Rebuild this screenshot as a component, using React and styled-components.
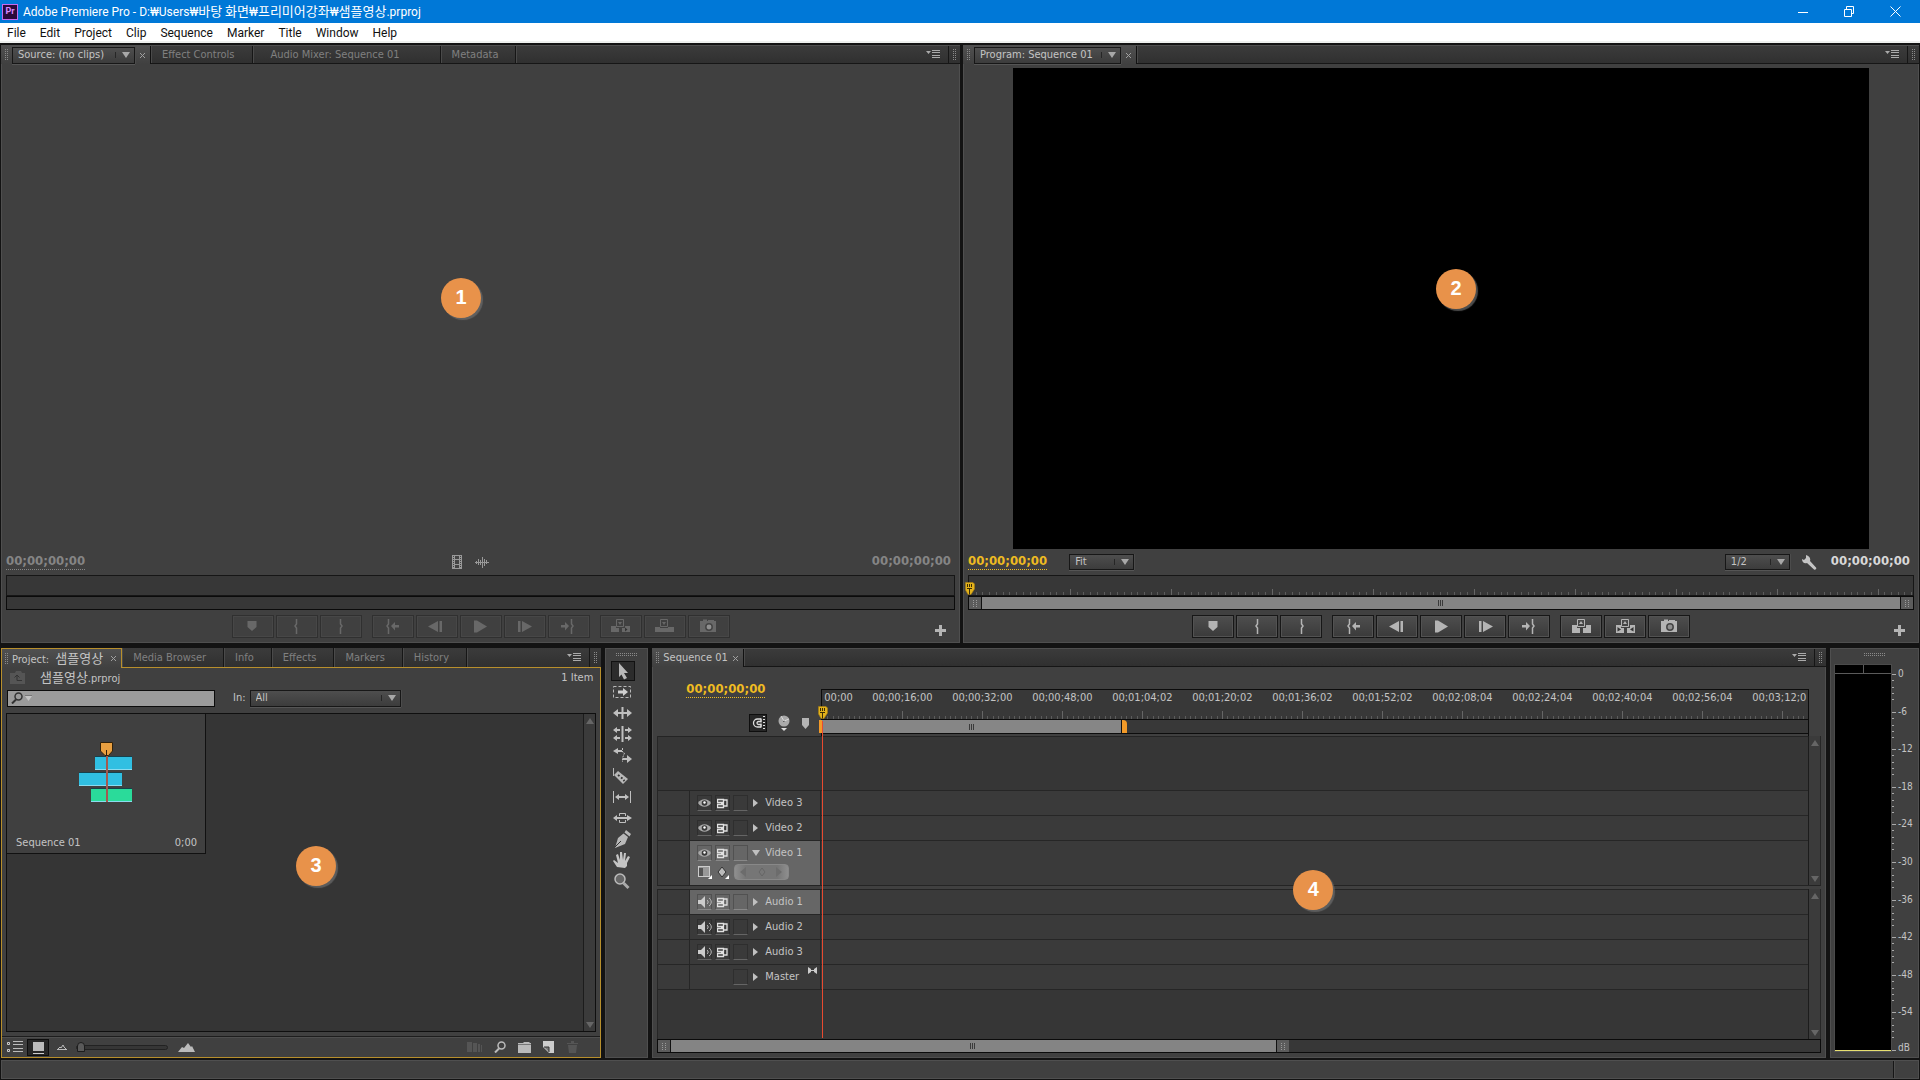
import React from 'react';
import styled, { createGlobalStyle, css } from 'styled-components';

const GlobalStyle = createGlobalStyle`
  * { box-sizing: border-box; }
  html, body { margin: 0; padding: 0; overflow: hidden; background: #131313; }
  body, button, input, select {
    font-family: 'DejaVu Sans Condensed', 'Noto Sans', 'Noto Sans CJK KR', sans-serif;
    font-size: 11px;
    line-height: 14px;
    color: #c4c4c4;
  }
  button { padding: 0; margin: 0; border: 0; background: none; }
  svg { display: block; flex: none; }
`;

const Window = styled.div`
  display: flex;
  flex-direction: column;
  height: 100vh;
  background: #131313;
`;

const TitleBar = styled.header`
  display: flex;
  align-items: center;
  flex: none;
  height: 23px;
  padding: 0 2px;
  background: #0078d7;
  color: #fff;
  font-family: Roboto, 'Noto Sans CJK KR', sans-serif;
  font-size: 12px;
  gap: 5px;
  white-space: nowrap;
`;

const AppBadge = styled.span`
  width: 16px;
  height: 16px;
  border: 1px solid #c46bf0;
  background: #2a0a3c;
  color: #d88bff;
  font-size: 9px;
  font-weight: bold;
  line-height: 13px;
  text-align: center;
`;

const WindowButtons = styled.div`
  display: flex;
  margin-left: auto;
`;

const WindowButton = styled.button`
  display: flex;
  align-items: center;
  justify-content: center;
  width: 46px;
  height: 23px;
`;

const MenuBar = styled.nav`
  display: flex;
  align-items: center;
  flex: none;
  height: 20px;
  padding: 1px 0 0 7px;
  gap: 14px;
  background: #fff;
  border-bottom: 2px solid #eef0ee;
`;

const MenuItem = styled.button`
  color: #111;
  font-family: Roboto, sans-serif;
  font-size: 12px;
`;

const Workspace = styled.main`
  display: flex;
  flex-direction: column;
  flex: 1;
  min-height: 0;
  gap: 5px;
  padding: 2px 1px 2px;
`;

const TopRow = styled.div`
  display: grid;
  grid-template-columns: 959fr 956fr;
  gap: 3px;
  flex: 598;
  min-height: 0;
`;

const BottomRow = styled.div`
  display: grid;
  grid-template-columns: 601fr 43px 1175fr 89px;
  gap: 4px;
  flex: 410;
  min-height: 0;
`;

const Panel = styled.section`
  position: relative;
  display: flex;
  flex-direction: column;
  min-width: 0;
  min-height: 0;
  background: #404040;
  border: 1px solid ${p => (p.$focused ? '#b88f2c' : '#4f4f4f')};
  border-top: ${p => (p.$focused ? '0' : '1px solid #4f4f4f')};
`;

const TabBar = styled.div`
  display: flex;
  flex: none;
  height: ${p => (p.$focused ? '20px' : '18px')};
  margin: 0 -1px;
  background: linear-gradient(#3b3b3b, #303030);
  border-bottom: 1px solid ${p => (p.$focused ? '#b88f2c' : '#161616')};
`;

const ActiveTab = styled.div`
  display: flex;
  align-items: center;
  height: ${p => (p.$focused ? '20px' : '18px')};
  padding: 0 4px 0 3px;
  gap: 4px;
  background: linear-gradient(#505050, #404040);
  border: 1px solid transparent;
  border-right-color: #111;
  border-width: 0 1px;
  ${p => p.$focused && css`
    border-color: #b88f2c;
    border-top-width: 1px;
  `}
  white-space: nowrap;
`;

const Tab = styled.button`
  padding: ${p => (p.$wide ? '0 40px 0 17px' : '0 17px 0 10px')};
  border-left: 1px solid #4a4a4a;
  border-right: 1px solid #161616;
  color: #808080;
  white-space: nowrap;
`;

const TabLabel = styled.span`
  color: #c4c4c4;
`;

const TabMenu = styled.button`
  display: flex;
  flex: 1;
  align-items: center;
  justify-content: flex-end;
  padding-right: 8px;
  border-left: 1px solid #4a4a4a;
`;

const BarEnd = styled.div`
  display: flex;
  align-items: center;
  width: 12px;
  padding-left: 4px;
  border-left: 1px solid #161616;
`;

const Korean = styled.span`
  margin: ${p => (p.$spaced ? '0 3px' : '0')};
  font-family: 'Noto Sans CJK KR', sans-serif;
  font-size: 13px;
`;

const SelectBox = styled.span`
  display: flex;
  align-items: center;
  position: relative;
  width: ${p => p.$width}px;
  height: ${p => p.$height}px;
  background: linear-gradient(#4e4e4e, #3c3c3c);
  border: 1px solid #171717;
  box-shadow: 0 1px 0 #555, 1px 0 0 #4c4c4c;
`;

const SelectField = styled.select`
  appearance: none;
  width: 100%;
  height: 100%;
  padding: 0 20px 1px 5px;
  border: 0;
  outline: 0;
  background: none;
  color: #c4c4c4;
  line-height: 12px;
`;

const SelectArrow = styled.span`
  position: absolute;
  right: 4px;
  top: 50%;
  transform: translateY(-50%);
  padding-left: 6px;
  border-left: 1px solid #262626;
  pointer-events: none;
`;

const Viewer = styled.div`
  display: flex;
  justify-content: center;
  flex: 1;
  min-height: 0;
  padding-top: 4px;
`;

const Video = styled.div`
  height: 100%;
  aspect-ratio: 16 / 9;
  background: #000;
`;

const TransportRow = styled.div`
  display: flex;
  align-items: center;
  flex: none;
  height: 26px;
  padding: 0 8px 0 4px;
`;

const Timecode = styled.span`
  padding-bottom: 2px;
  color: ${p => p.$color};
  font-size: 13px;
  font-weight: bold;
  line-height: 12px;
  border-bottom: 1px ${p => (p.$plain ? 'solid transparent' : 'dotted')};
  white-space: nowrap;
`;

const MediaIcons = styled.div`
  display: flex;
  align-items: center;
  justify-content: center;
  flex: 1;
  gap: 13px;
  padding-right: 16px;
`;

const ScaleOptions = styled.div`
  display: flex;
  align-items: center;
  justify-content: space-between;
  flex: 1;
  padding: 0 12px 0 22px;
`;

const WrenchButton = styled.button`
  margin-right: 14px;
`;

const RulerStrip = styled.div`
  position: relative;
  flex: none;
  height: 21px;
  margin: 0 4px;
  border: 1px solid #161616;
  background: #373737;
`;

const ZoomBar = styled.div`
  display: flex;
  flex: none;
  height: 14px;
  margin: ${p => (p.$flush ? '0' : '0 4px')};
  border: 1px solid #0b0b0b;
  background: #373737;
`;

const ZoomHandle = styled.span`
  display: flex;
  align-items: center;
  justify-content: center;
  width: 13px;
  background: #5c5c5c;
  border: 0 solid #111;
  border-width: ${p => (p.$end ? '0 0 0 1px' : '0 1px 0 0')};
`;

const ZoomThumb = styled.span`
  display: flex;
  align-items: center;
  justify-content: center;
  flex: ${p => p.$flex || 1};
  background: #848484;
`;

const ZoomRest = styled.span`
  flex: ${p => p.$flex};
`;

const Playhead = styled.span`
  position: absolute;
  left: -4px;
  bottom: ${p => p.$bottom};
  z-index: 2;
`;

const ButtonRow = styled.div`
  position: relative;
  display: flex;
  justify-content: center;
  flex: none;
  height: 32px;
  padding-top: 5px;
  gap: 10px;
`;

const ButtonGroup = styled.div`
  display: flex;
  gap: 2px;
`;

const TransportButton = styled.button`
  display: flex;
  align-items: center;
  justify-content: center;
  width: 42px;
  height: 23px;
  background: ${p => (p.$dim ? '#404040' : 'linear-gradient(#4e4e4e, #3a3a3a)')};
  border: 1px solid ${p => (p.$dim ? '#303030' : '#171717')};
  box-shadow: inset 0 0 0 1px ${p => (p.$dim ? '#474747' : '#525252')};
  color: ${p => (p.$dim ? '#686868' : '#b4b4b4')};
`;

const AddButton = styled.button`
  position: absolute;
  right: 13px;
  bottom: 6px;
`;

const Marker = styled.span`
  position: absolute;
  left: ${p => p.$left};
  top: ${p => p.$top};
  width: 40px;
  height: 40px;
  border-radius: 50%;
  background: #e8924a;
  box-shadow: 2px 2px 1px rgba(110, 110, 110, 0.7);
  color: #fff;
  font-family: 'Liberation Sans', sans-serif;
  font-size: 20px;
  font-weight: bold;
  line-height: 38px;
  text-align: center;
  z-index: 3;
`;

/* project panel */
const ProjectInfo = styled.div`
  display: flex;
  align-items: center;
  flex: none;
  height: 19px;
  padding: 0 7px 0 8px;
  white-space: nowrap;
`;

const ProjectName = styled.span`
  flex: 1;
  padding-left: 14px;
`;

const FilterRow = styled.div`
  display: flex;
  align-items: center;
  flex: none;
  height: 22px;
  padding-left: 5px;
`;

const SearchBox = styled.label`
  display: flex;
  align-items: center;
  width: 208px;
  height: 17px;
  padding-left: 3px;
  border: 1px solid #0c0c0c;
  background: #9b9b9b;
`;

const SearchInput = styled.input`
  flex: 1;
  min-width: 0;
  height: 15px;
  padding: 0 4px;
  border: 0;
  outline: 0;
  background: none;
  color: #222;
`;

const InLabel = styled.label`
  padding: 0 4px 0 18px;
`;

const BinView = styled.div`
  display: flex;
  flex: 1;
  min-height: 0;
  margin: 4px;
  border: 1px solid #0f0f0f;
  background: #353535;
`;

const BinItems = styled.div`
  flex: 1;
`;

const ClipCard = styled.article`
  display: flex;
  flex-direction: column;
  width: 199px;
  height: 140px;
  background: #404040;
  border: 1px solid #111;
  border-width: 0 1px 1px 0;
`;

const ClipThumb = styled.div`
  display: flex;
  flex: 1;
  align-items: center;
  justify-content: center;
  padding-bottom: 6px;
`;

const ClipCaption = styled.div`
  display: flex;
  justify-content: space-between;
  padding: 0 8px 3px 9px;
`;

const ScrollColumn = styled.div`
  display: flex;
  flex-direction: column;
  align-items: center;
  justify-content: space-between;
  flex: none;
  width: 12px;
  padding: 4px 0 3px;
  border-left: 1px solid #1c1c1c;
  background: #3b3b3b;
`;

const ProjectFooter = styled.div`
  display: flex;
  align-items: center;
  flex: none;
  height: 21px;
  padding: 0 21px 0 4px;
  border-top: 1px solid #1d1d1d;
  box-shadow: inset 0 1px 0 #4f4f4f;
`;

const FooterButton = styled.button`
  display: flex;
  align-items: center;
  justify-content: center;
  width: ${p => p.$width}px;
  height: 17px;
  ${p => p.$active && css`
    margin: 0 8px 0 4px;
    background: #262626;
    border: 1px solid #0e0e0e;
  `}
`;

const SizeSlider = styled.input`
  appearance: none;
  width: 92px;
  height: 13px;
  margin: 0 10px 0 9px;
  background: none;

  &::-webkit-slider-runnable-track {
    height: 5px;
    border: 1px solid #222;
    border-radius: 3px;
    background: #363636;
  }

  &::-webkit-slider-thumb {
    appearance: none;
    width: 8px;
    height: 10px;
    margin-top: -4px;
    border: 1px solid #1d1d1d;
    border-radius: 4px 4px 0 0;
    background: #5a5a5a;
  }
`;

const FooterTools = styled.div`
  display: flex;
  align-items: center;
  gap: 10px;
  margin-left: auto;
`;

/* tools */
const ToolList = styled.div`
  display: flex;
  flex-direction: column;
  align-items: center;
  gap: 1px;
  padding-right: 8px;
`;

const ToolButton = styled.button`
  display: flex;
  align-items: center;
  justify-content: center;
  width: 24px;
  height: 20px;
  border: 1px solid ${p => (p.$active ? '#111' : 'transparent')};
  background: ${p => (p.$active ? '#2c2c2c' : 'none')};
`;

const GripTop = styled.div`
  display: flex;
  justify-content: center;
  flex: none;
  height: 12px;
  padding-top: 4px;
`;

/* timeline */
const TimelineBody = styled.div`
  position: relative;
  display: flex;
  flex-direction: column;
  flex: 1;
  min-height: 0;
  padding: 1px 4px 4px;
`;

const TimelineHead = styled.div`
  display: flex;
  flex: none;
  height: 68px;
  padding-right: 12px;
`;

const HeadControls = styled.div`
  display: flex;
  flex-direction: column;
  flex: none;
  width: 164px;
  padding: 15px 11px 4px 29px;
  justify-content: space-between;
  align-items: flex-start;
`;

const HeadIcons = styled.div`
  display: flex;
  align-items: center;
  align-self: flex-end;
  gap: 11px;
`;

const SnapButton = styled.button`
  padding: 1px;
  border: 1px solid #0e0e0e;
  background: #272727;
`;

const TimeRuler = styled.div`
  position: relative;
  flex: 1;
  min-width: 0;
  height: 47px;
  margin-top: 21px;
  border: 1px solid #0c0c0c;
  border-bottom: 0;
  background: #383838;
`;

const RulerLabels = styled.div`
  display: flex;
  height: 14px;
`;

const labelPlaces = {
  first: css`width: 40px; padding-left: 2px;`,
  middle: css`width: 80px; text-align: center;`,
  last: css`padding-left: 10px;`,
};

const RulerLabel = styled.span`
  flex: none;
  margin-top: 1px;
  ${p => labelPlaces[p.$place]}
`;

const TicksRow = styled.div`
  position: relative;
  height: 15px;
`;

const WorkArea = styled.div`
  display: flex;
  height: 15px;
  border: 1px solid #0c0c0c;
  border-width: 1px 0;
`;

const WorkAreaBar = styled.div`
  display: flex;
  align-items: center;
  justify-content: center;
  width: 300px;
  background: #868686;
  border-right: 1px solid #111;
`;

const WorkAreaEnd = styled.span`
  width: 5px;
  background: #f29a28;
  border-radius: 0 4px 0 0;
`;

const WorkAreaStart = styled.span`
  position: absolute;
  left: -3px;
  bottom: 3px;
  width: 3px;
  height: 13px;
  background: #f29a28;
`;

const RulerBase = styled.div`
  height: 2px;
  background: #404040;
`;

const TrackGroup = styled.div`
  display: flex;
  flex: ${p => (p.$grow ? 1 : 'none')};
  min-height: 0;
  border: 1px solid #262626;
  border-width: 0 1px 0 1px;
`;

const Tracks = styled.div`
  flex: 1;
  min-width: 0;
  background: #363636;
  border-top: 1px solid #242424;
`;

const TrackSpacer = styled.div`
  height: 53px;
`;

const TrackRow = styled.div`
  display: flex;
  height: ${p => (p.$open ? '45px' : '25px')};
  background: #3a3a3a;
  border-top: 1px solid #262626;
  ${p => p.$first && css`
    height: 24px;
    border-top: 0;
  `}
`;

const TrackEnd = styled.div`
  border-top: 1px solid #262626;
`;

const TrackGutter = styled.div`
  flex: none;
  width: 32px;
  border-right: 1px solid #262626;
`;

const TrackHeader = styled.div`
  flex: none;
  width: 131px;
  padding: 4px 0 0 7px;
  background: ${p => (p.$selected ? '#666' : 'transparent')};
  border-right: 1px solid #262626;
`;

const TrackControls = styled.div`
  position: relative;
  display: flex;
  align-items: center;
  height: 16px;
  gap: 3px;
`;

const TrackToggle = styled.button`
  display: flex;
  align-items: center;
  justify-content: center;
  width: 15px;
  height: 16px;
  border: 1px solid ${p => (p.$blank ? 'transparent' : 'rgba(0, 0, 0, 0.2)')};
  border-bottom-color: ${p => (p.$blank ? 'transparent' : 'rgba(255, 255, 255, 0.22)')};
`;

const Disclosure = styled.button`
  display: flex;
  justify-content: center;
  width: 9px;
`;

const TrackName = styled.span`
  padding-left: 2px;
`;

const MasterIcon = styled.span`
  position: absolute;
  right: 3px;
  top: -2px;
`;

const KeyframeRow = styled.div`
  display: flex;
  align-items: center;
  height: 18px;
  gap: 5px;
  margin-top: 2px;
  padding-left: 1px;
`;

const KeyframeNav = styled.div`
  display: flex;
  align-items: center;
  justify-content: space-around;
  width: 55px;
  height: 16px;
  border-radius: 4px;
  background: linear-gradient(90deg, #8e8e8e, #767676 20%, #767676 80%, #8e8e8e);
  border: 1px solid #888;
`;

const Splitter = styled.div`
  flex: none;
  height: 4px;
  background: #404040;
  border-top: 1px solid #242424;
`;

const RedLine = styled.div`
  position: absolute;
  left: 169px;
  top: 54px;
  bottom: 19px;
  width: 1px;
  background: #e84a30;
  z-index: 1;
`;

/* audio meter */
const MeterBody = styled.div`
  display: flex;
  flex: 1;
  min-height: 0;
  padding: 3px 0 5px 3px;
`;

const MeterBars = styled.div`
  display: flex;
  flex-direction: column;
  width: 58px;
  background: #000;
  border: 1px solid #4b4b4b;
  border-bottom-color: #555;
`;

const MeterClip = styled.div`
  display: flex;
  flex: none;
  height: 9px;
  border-bottom: 1px solid #5a5a5a;
`;

const MeterClipCell = styled.button`
  flex: 1;
  & + & { border-left: 1px solid #5a5a5a; }
`;

const MeterFloor = styled.div`
  height: 1px;
  margin-top: auto;
  background: #e8e070;
`;

const MeterScale = styled.div`
  display: flex;
  flex-direction: column;
  flex: 1;
  padding-top: 4px;
`;

const ScaleCell = styled.div`
  display: flex;
  flex: ${p => (p.$last ? 'none' : 1)};
  min-height: 0;
  height: ${p => (p.$last ? '8px' : 'auto')};
  gap: 1px;
  font-size: 10px;
  line-height: ${p => (p.$last ? '8px' : '12px')};
`;

const StatusBar = styled.footer`
  display: flex;
  flex: none;
  height: 19px;
  margin: 0 1px 1px;
  background: #404040;
  border: 1px solid #4f4f4f;
`;

const StatusEnd = styled.span`
  width: 25px;
  margin-left: auto;
  border-left: 1px solid #161616;
  box-shadow: inset 1px 0 0 #4f4f4f;
`;

const Grip = () => (
  <svg width="3" height="12" fill="#8a8a8a">
    {[0, 2, 4, 6, 8, 10].map(y => (
      <g key={y}>
        <rect x="0" y={y} width="1" height="1" />
        <rect x="2" y={y} width="1" height="1" />
      </g>
    ))}
  </svg>
);

const WideGrip = () => (
  <svg width="22" height="4" fill="#8a8a8a">
    {Array.from({ length: 11 }, (_, i) => (
      <g key={i}>
        <rect x={i * 2} y="0" width="1" height="1" />
        <rect x={i * 2} y="2" width="1" height="1" />
      </g>
    ))}
  </svg>
);

const HandleDots = () => (
  <svg width="4" height="7" fill="#9a9a9a">
    <path d="M0 0h1v1H0zM3 0h1v1H3zM0 2h1v1H0zM3 2h1v1H3zM0 4h1v1H0zM3 4h1v1H3zM0 6h1v1H0zM3 6h1v1H3z" />
  </svg>
);

const ThumbLines = () => (
  <svg width="6" height="6"><path d="M0.5 0v6M2.5 0v6M4.5 0v6" stroke="#3a3a3a" /></svg>
);

const Arrow = ({ dir = 'down', color = '#a8a8a8' }) => {
  const shapes = { down: 'M0 0h8L4 6z', up: 'M0 6h8L4 0z', right: 'M1 0v8l5-4z' };
  return <svg width="8" height={dir === 'right' ? 8 : 6} fill={color}><path d={shapes[dir]} /></svg>;
};

const CloseMark = () => (
  <svg width="7" height="7"><path d="M1 1l5 5M6 1l-5 5" stroke="#a0a0a0" /></svg>
);

const PanelMenuIcon = () => (
  <svg width="14" height="9">
    <path d="M0 1h5L2.500 4z" fill="#aaa" />
    <path d="M6 .5h8M6 2.500h8M6 5.500h8M6 7.500h8" stroke="#aaa" />
  </svg>
);

const PlayheadIcon = () => (
  <svg width="10" height="13">
    <path d="M.5.5h7.500l1.500 1.500v5L6 12.500H3L.5 8z" fill="#e3b21b" stroke="#a87d10" strokeWidth=".6" />
    <path d="M2.500 2v3M4.500 2v3M6.500 2v3M2 6.500h5M4.500 6.500v6" stroke="#3b2c05" />
  </svg>
);

const PlusIcon = () => (
  <svg width="11" height="11"><path d="M4 0h3v4h4v3H7v4H4V7H0V4h4z" fill="#b4b4b4" /></svg>
);

const transportShapes = {
  marker: <path d="M4.500 3h9v6L9 13 4.500 9z" />,
  markIn: <path d="M9.500 1v5L8 8l1.500 2v6" fill="none" stroke="currentColor" strokeWidth="1.500" />,
  markOut: <path d="M9.500 1v5L11 8l-1.500 2v6" fill="none" stroke="currentColor" strokeWidth="1.500" />,
  goIn: (
    <>
      <path d="M5.500 1v5L4 8l1.500 2v6" fill="none" stroke="currentColor" strokeWidth="1.500" />
      <path d="M8 8l4-4v3h4v2.500h-4v3z" />
    </>
  ),
  stepBack: <path d="M11 3v11L1 8.500zM12.500 3H15v11h-2.500z" />,
  play: <path d="M3 2.500l3 0 10 6-10 6H3z" />,
  stepForward: <path d="M7 3v11l10-5.500zM3 3h2.500v11H3z" />,
  goOut: (
    <>
      <path d="M12.500 1v5L14 8l-1.500 2v6" fill="none" stroke="currentColor" strokeWidth="1.500" />
      <path d="M10 8L6 4v3H2v2.500h4v3z" />
    </>
  ),
  insert: (
    <>
      <path d="M0 8h5v2h3v4H0zM11 10h3l0-2h5v6h-8z" />
      <path d="M5.500 1.500h7v7h-7z" fill="none" stroke="currentColor" />
      <path d="M7 4h4L9 7z" />
      <path d="M14 9.500v4l2.500-2z" fill="#333" />
    </>
  ),
  overwrite: (
    <>
      <path d="M0 9h5v1h8V9h6v5H0z" />
      <path d="M5.500 1.500h7v7h-7z" fill="none" stroke="currentColor" />
      <path d="M7 4h4L9 7z" />
    </>
  ),
  lift: (
    <>
      <path d="M0 7h5v3h3v5H0zM11 10h3V7h5v8h-8z" />
      <path d="M5.500 1.500h7v7h-7z" fill="none" stroke="currentColor" />
      <path d="M7 6h4L9 3z" />
    </>
  ),
  extract: (
    <>
      <path d="M0 7h5v3h3v5H0zM11 10h3V7h5v8h-8z" />
      <path d="M5.500 1.500h7v7h-7z" fill="none" stroke="currentColor" />
      <path d="M7 6h4L9 3z" />
      <path d="M1.500 9v4.500l3.500-2zM17.500 9v4.500l-3.500-2z" fill="#333" />
    </>
  ),
  camera: (
    <>
      <path d="M1 3h3V1.500h4V3h1V2h6v1h2v11H1z" />
      <circle cx="10" cy="9" r="3.200" fill="#909090" stroke="#444" strokeWidth="1.500" />
    </>
  ),
};

const TransportIcon = ({ name }) => (
  <svg width="19" height="17" fill="currentColor">{transportShapes[name]}</svg>
);

const FilmIcon = () => (
  <svg width="10" height="14">
    <rect width="10" height="14" fill="#999" />
    <path d="M3 1h4v3H3zM3 5h4v4H3zM3 10h4v3H3z" fill="#444" />
    <path d="M1.500 1v12M8.500 1v12" stroke="#444" strokeDasharray="1 1" />
  </svg>
);

const WaveIcon = () => (
  <svg width="14" height="12"><path d="M0 6.500h14M1.500 5v3M3.500 3v6M5.500 4v5M7.500 1v11M9.500 3v7M11.500 4v4" stroke="#999" /></svg>
);

const WrenchIcon = () => (
  <svg width="15" height="15" fill="#c4c4c4">
    <path d="M4 0l0 3-2 2-2-1c0 3 2 5 5 4l7 6.500c1.500.8 3-.8 2-2L8 6c1-3-1-5-4-6z" />
  </svg>
);

const TickMarks = styled.svg`
  position: absolute;
  left: 0;
  bottom: 0;
`;

const Ticks = ({ minor, every, major, base }) => (
  <TickMarks width="100%" height={base}>
    {Array.from({ length: 420 }, (_, i) => {
      const x = Math.round(i * minor) + 0.5;
      return <path key={i} d={`M${x} ${base}v-${i % every ? 3 : major}`} stroke={i % every ? '#5c5c5c' : '#666'} />;
    })}
  </TickMarks>
);

const SearchIcon = ({ color = '#333' }) => (
  <svg width="12" height="12" fill="none" stroke={color}>
    <circle cx="7.500" cy="4.500" r="3.500" strokeWidth="1.500" />
    <path d="M5 7.500L1 11.500" strokeWidth="2" />
  </svg>
);

const SequenceArt = () => (
  <svg width="54" height="60">
    <path d="M16 14h37v14H16zM0 30h43v14H0z" fill="#30bfe2" />
    <path d="M12 46h41v14H12z" fill="#2adb9a" />
    <path d="M16 14.500h37M0 30.500h43M12 46.500h41" stroke="#17414c" />
    <path d="M16 27.500h37M0 43.500h43M12 59.500h41" stroke="#8adcf0" />
    <path d="M28 14v46" stroke="#a35a50" strokeWidth="2" />
    <path d="M21.500.5h12v8.500L29.500 13.500h-3.500L21.500 9z" fill="#eaa040" stroke="#33220a" />
    <path d="M27.500 8v6" stroke="#33220a" />
  </svg>
);

const toolShapes = {
  selection: <path d="M7 1l9 10h-4l3 5-3 1.500-2.500-5L7 15z" fill="#b8b8b8" />,
  trackSelect: (
    <>
      <rect x="1.500" y="3.500" width="17" height="11" fill="none" stroke="#b8b8b8" strokeDasharray="3 2" />
      <path d="M6 7.500h5V5l5 4-5 4v-2.500H6z" fill="#d0d0d0" />
    </>
  ),
  ripple: (
    <>
      <path d="M10.500 3v12" stroke="#c0c0c0" strokeWidth="2" />
      <path d="M1 9l5-4v3h9V5l5 4-5 4v-3H6v3z" fill="#c0c0c0" />
    </>
  ),
  rolling: (
    <>
      <path d="M10.500 1v16" stroke="#c0c0c0" strokeWidth="2" />
      <path d="M1 5l4-3v2h3v2H5v2zM20 5l-4-3v2h-3v2h3v2zM1 13l4-3v2h3v2H5v2zM20 13l-4-3v2h-3v2h3v2z" fill="#c0c0c0" />
    </>
  ),
  rate: (
    <>
      <path d="M1 5l5-3v2h4v2H6v2zM20 13l-5-4v3h-4v2h4v3z" fill="#c0c0c0" />
      <path d="M10.500 2v4l2 1-2 5v4" stroke="#c0c0c0" fill="none" strokeDasharray="2 1" />
    </>
  ),
  razor: (
    <>
      <path d="M1.500 1v8" stroke="#b8b8b8" />
      <path d="M2 8l4-4 10 8-5 5z" fill="#b8b8b8" />
      <path d="M6 8l1.500 1M9 10.500l1.500 1M11.500 13l1 1" stroke="#333" strokeWidth="2" />
    </>
  ),
  slip: (
    <>
      <path d="M1.500 3v12M18.500 3v12" stroke="#c0c0c0" />
      <path d="M3 9l4-3v2h6V6l4 3-4 3v-2H7v2z" fill="#c0c0c0" />
    </>
  ),
  slide: (
    <>
      <path d="M1 9l4-3v2h10V6l5 3-5 3v-2H5v2z" fill="#c0c0c0" />
      <path d="M7.500 7V4.500h6V7M7.500 11v2.500h6V11" fill="none" stroke="#c0c0c0" />
    </>
  ),
  pen: (
    <>
      <path d="M14 0l5 4-1.500 2.500-5-4zM11.500 3.500l4.500 3.500-3 7-10 4 3-10z" fill="#b8b8b8" />
      <path d="M3 17l6-6" stroke="#333" />
    </>
  ),
  hand: <path d="M5 16l-4-6 1-1 4 3L4 4l2-1 2 6V1h2l1 8 1-7h2l-1 8 3-5 2 1-3 6v3l-2 2z" fill="#c4c4c4" />,
  zoom: (
    <>
      <circle cx="8" cy="7" r="5" fill="#666" stroke="#bbb" strokeWidth="1.500" />
      <path d="M11.500 11l5 5" stroke="#aaa" strokeWidth="3" />
    </>
  ),
};

const EyeIcon = () => (
  <svg width="13" height="10">
    <path d="M0 5c3-5 10-5 13 0-3 5-10 5-13 0z" fill="#a8a8a8" />
    <circle cx="6.500" cy="5" r="2.800" fill="#383838" />
    <circle cx="6.500" cy="4.500" r="1.200" fill="#fff" />
  </svg>
);

const SyncIcon = () => (
  <svg width="11" height="11" fill="none" stroke="#e0e0e0">
    <path d="M.5 1.500h6v3h-6zM.5 6.500h6v3h-6zM7 5.500h-3M7 2h3v6H7" strokeWidth="1.300" />
  </svg>
);

const SpeakerIcon = () => (
  <svg width="14" height="12">
    <path d="M0 4h3l4-4v12L3 8H0z" fill="#ccc" />
    <path d="M9 4c1.500 1 1.500 3 0 4M11 2c3 2 3 6 0 8" fill="none" stroke="#bbb" />
  </svg>
);

const videoTracks = [
  { name: 'Video 3' },
  { name: 'Video 2' },
  { name: 'Video 1', open: true, selected: true },
];

const audioTracks = [
  { name: 'Audio 1', audio: true, selected: true, first: true },
  { name: 'Audio 2', audio: true },
  { name: 'Audio 3', audio: true },
  { name: 'Master', master: true },
];

const Track = ({ name, open, selected, audio, master, first }) => (
  <TrackRow $open={open} $first={first}>
    <TrackGutter />
    <TrackHeader $selected={selected}>
      <TrackControls>
        <TrackToggle $blank={master}>{!master && (audio ? <SpeakerIcon /> : <EyeIcon />)}</TrackToggle>
        <TrackToggle $blank={master}>{!master && <SyncIcon />}</TrackToggle>
        <TrackToggle />
        <Disclosure><Arrow dir={open ? 'down' : 'right'} color="#c0c0c0" /></Disclosure>
        <TrackName>{name}</TrackName>
        {master && (
          <MasterIcon><svg width="9" height="7" fill="#ccc"><path d="M0 0l3 2v3L0 7zM9 0L6 2v3l3 2zM3 3h3v1H3z" /></svg></MasterIcon>
        )}
      </TrackControls>
      {open && (
        <KeyframeRow>
          <svg width="14" height="13">
            <rect x=".5" y=".5" width="11" height="10" fill="#999" stroke="#ccc" />
            <path d="M1 2h4v8H1z" fill="#555" /><path d="M14 9v4h-4z" fill="#fff" />
          </svg>
          <svg width="12" height="13">
            <path d="M5 1l4 5-4 5-4-5z" fill="#bbb" stroke="#333" /><path d="M12 9v4H8z" fill="#fff" />
          </svg>
          <KeyframeNav>
            <svg width="7" height="10"><path d="M6 0v10L0 5z" fill="#6c6c6c" /></svg>
            <svg width="8" height="10"><path d="M4 1l3 4-3 4-3-4z" fill="#777" stroke="#666" /></svg>
            <svg width="7" height="10"><path d="M0 0v10l6-5z" fill="#6c6c6c" /></svg>
          </KeyframeNav>
        </KeyframeRow>
      )}
    </TrackHeader>
  </TrackRow>
);

const Scroll = () => (
  <ScrollColumn>
    <Arrow dir="up" color="#666" />
    <Arrow color="#666" />
  </ScrollColumn>
);

const Dropdown = ({ width, height = 16, label, id, options }) => (
  <SelectBox $width={width} $height={height}>
    <SelectField id={id} aria-label={label}>
      {options.map(o => <option key={o}>{o}</option>)}
    </SelectField>
    <SelectArrow><Arrow /></SelectArrow>
  </SelectBox>
);

const PanelTabs = ({ title, children, focused }) => (
  <TabBar $focused={focused}>
    <ActiveTab $focused={focused}>
      <Grip />
      {title}
      <CloseMark />
    </ActiveTab>
    {children}
    <TabMenu aria-label="Panel menu"><PanelMenuIcon /></TabMenu>
    <BarEnd><Grip /></BarEnd>
  </TabBar>
);

const Transport = ({ dim, last }) => {
  const groups = [
    ['marker', 'markIn', 'markOut'],
    ['goIn', 'stepBack', 'play', 'stepForward', 'goOut'],
    last,
  ];
  return (
    <ButtonRow>
      {groups.map((names, i) => (
        <ButtonGroup key={i}>
          {names.map(n => (
            <TransportButton key={n} $dim={dim} disabled={dim} aria-label={n}><TransportIcon name={n} /></TransportButton>
          ))}
        </ButtonGroup>
      ))}
      <AddButton aria-label="Button editor"><PlusIcon /></AddButton>
    </ButtonRow>
  );
};

const SourcePanel = () => (
  <Panel>
    <PanelTabs title={<Dropdown width={123} height={17} label="Source" options={['Source: (no clips)']} />}>
      <Tab>Effect Controls</Tab>
      <Tab $wide>Audio Mixer: Sequence 01</Tab>
      <Tab>Metadata</Tab>
    </PanelTabs>
    <Viewer />
    <TransportRow>
      <Timecode $color="#858585">00;00;00;00</Timecode>
      <MediaIcons><FilmIcon /><WaveIcon /></MediaIcons>
      <Timecode $color="#858585" $plain>00;00;00;00</Timecode>
    </TransportRow>
    <RulerStrip />
    <ZoomBar />
    <Transport dim last={['insert', 'overwrite', 'camera']} />
    <Marker $left="439px" $top="232px">1</Marker>
  </Panel>
);

const ProgramPanel = () => (
  <Panel>
    <PanelTabs title={<Dropdown width={147} height={17} label="Program" options={['Program: Sequence 01']} />} />
    <Viewer><Video /></Viewer>
    <TransportRow>
      <Timecode $color="#eebb22">00;00;00;00</Timecode>
      <ScaleOptions>
        <Dropdown width={65} label="Zoom level" options={['Fit']} />
        <Dropdown width={65} label="Playback resolution" options={['1/2']} />
      </ScaleOptions>
      <WrenchButton aria-label="Settings"><WrenchIcon /></WrenchButton>
      <Timecode $color="#d8d8d8" $plain>00;00;00;00</Timecode>
    </TransportRow>
    <RulerStrip>
      <Ticks minor={6.73} every={15} major={6} base={7} />
      <Playhead $bottom="0"><PlayheadIcon /></Playhead>
    </RulerStrip>
    <ZoomBar>
      <ZoomHandle><HandleDots /></ZoomHandle>
      <ZoomThumb><ThumbLines /></ZoomThumb>
      <ZoomHandle $end><HandleDots /></ZoomHandle>
    </ZoomBar>
    <Transport last={['lift', 'extract', 'camera']} />
    <Marker $left="472px" $top="223px">2</Marker>
  </Panel>
);

const ProjectPanel = () => (
  <Panel $focused>
    <PanelTabs focused title={<TabLabel>Project: <Korean $spaced>샘플영상</Korean></TabLabel>}>
      <Tab>Media Browser</Tab>
      <Tab>Info</Tab>
      <Tab>Effects</Tab>
      <Tab>Markers</Tab>
      <Tab>History</Tab>
    </PanelTabs>
    <ProjectInfo>
      <svg width="16" height="13"><path d="M0 2h5l1-2h5l1 2h3v11H0z" fill="#555" /><path d="M12 9.500H7V5M4.500 6.500L7 4l2.500 2.500" stroke="#333" fill="none" /></svg>
      <ProjectName><Korean>샘플영상</Korean>.prproj</ProjectName>
      <span>1 Item</span>
    </ProjectInfo>
    <FilterRow>
      <SearchBox>
        <SearchIcon />
        <svg width="10" height="7"><path d="M2 1h7L5.500 6z" fill="#c4c4c4" /><path d="M2 .5h7" stroke="#777" /></svg>
        <SearchInput type="text" aria-label="Search project" />
      </SearchBox>
      <InLabel htmlFor="search-in">In:</InLabel>
      <Dropdown id="search-in" width={151} height={17} options={['All']} />
    </FilterRow>
    <BinView>
      <BinItems>
        <ClipCard>
          <ClipThumb><SequenceArt /></ClipThumb>
          <ClipCaption><span>Sequence 01</span><span>0;00</span></ClipCaption>
        </ClipCard>
      </BinItems>
      <Scroll />
    </BinView>
    <ProjectFooter>
      <FooterButton $width={17} aria-label="List view">
        <svg width="16" height="12"><path d="M.5 1.500h2v2h-2zM.5 8.500h2v2h-2z" fill="none" stroke="#ccc" /><path d="M6 .5h10M6 3.500h10M6 7.500h10M6 10.500h10" stroke="#bbb" /></svg>
      </FooterButton>
      <FooterButton $width={22} $active aria-label="Icon view">
        <svg width="11" height="13"><path d="M0 1h11v9H0z" fill="#bbb" /><path d="M0 12.500h11" stroke="#ccc" /></svg>
      </FooterButton>
      <svg width="10" height="6"><path d="M0 5.500h10M1 5l2-2 1 1 2-3 1 2 2 2" fill="none" stroke="#bbb" /></svg>
      <SizeSlider type="range" min="0" max="100" defaultValue="0" aria-label="Thumbnail size" />
      <svg width="17" height="9"><path d="M0 9l4-5 2 1 4-5 3 4 1-1 3 6z" fill="#bbb" /></svg>
      <FooterTools>
        <FooterButton $width={16} aria-label="Automate to sequence">
          <svg width="16" height="10" fill="#555"><path d="M0 0h5v10H0zM6 1h4v9H6zM11 2h2v8h-2zM14 3h1v7h-1z" /></svg>
        </FooterButton>
        <FooterButton $width={14} aria-label="Find"><SearchIcon color="#bbb" /></FooterButton>
        <FooterButton $width={14} aria-label="New bin">
          <svg width="13" height="11"><path d="M0 1h5l1-1h5l1 1h1v10H0z" fill="#bbb" /><path d="M0 2.500h13" stroke="#777" /></svg>
        </FooterButton>
        <FooterButton $width={14} aria-label="New item">
          <svg width="11" height="12"><path d="M0 0h11v12H6L0 6z" fill="#ccc" /><path d="M1 6h5v5" fill="#777" stroke="#333" /></svg>
        </FooterButton>
        <FooterButton $width={14} aria-label="Clear">
          <svg width="11" height="12" fill="#555"><path d="M0 2h4V0h3v2h4v1H0zM1 4h9l-1 8H2z" /></svg>
        </FooterButton>
      </FooterTools>
    </ProjectFooter>
    <Marker $left="294px" $top="198px">3</Marker>
  </Panel>
);

const ToolsPanel = () => (
  <Panel>
    <GripTop><WideGrip /></GripTop>
    <ToolList>
      {Object.keys(toolShapes).map(name => (
        <ToolButton key={name} $active={name === 'selection'} aria-label={name}>
          <svg width="21" height="18">{toolShapes[name]}</svg>
        </ToolButton>
      ))}
    </ToolList>
  </Panel>
);

// the last label has no room for its frame digit
const rulerTimes = [
  '00;00', '00;00;16;00', '00;00;32;00', '00;00;48;00', '00;01;04;02', '00;01;20;02', '00;01;36;02',
  '00;01;52;02', '00;02;08;04', '00;02;24;04', '00;02;40;04', '00;02;56;04', '00;03;12;0',
];

const labelPlace = i => {
  if (i === 0) return 'first';
  return i === rulerTimes.length - 1 ? 'last' : 'middle';
};

const TimelinePanel = () => (
  <Panel>
    <PanelTabs title={<TabLabel>Sequence 01</TabLabel>} />
    <TimelineBody>
      <TimelineHead>
        <HeadControls>
          <Timecode $color="#eebb22">00;00;00;00</Timecode>
          <HeadIcons>
            <SnapButton aria-label="Snap">
              <svg width="14" height="14"><path d="M10 3H6.500a4 4 0 000 8H10M10 6.500v-1H7.500a1.500 1.500 0 000 3H10v-1" fill="none" stroke="#ddd" strokeWidth="1.300" /><path d="M10 2.500v3M10 8.500v3" stroke="#ddd" strokeWidth="1.500" /><path d="M13 0v14" stroke="#ddd" strokeWidth="2" strokeDasharray="1 2" /></svg>
            </SnapButton>
            <svg width="12" height="16"><circle cx="6" cy="6" r="5.500" fill="#aaa" /><circle cx="6" cy="6" r="1" fill="#444" /><path d="M6 6L3 1M6 6l5-2" stroke="#ddd" /><path d="M3 13h6l-3 3z" fill="#ddd" /></svg>
            <svg width="9" height="11"><path d="M1 0h7v7l-3.500 4L1 7z" fill="#b4b4b4" /></svg>
          </HeadIcons>
        </HeadControls>
        <TimeRuler>
          <RulerLabels>
            {rulerTimes.map((t, i) => <RulerLabel key={t} $place={labelPlace(i)}>{t}</RulerLabel>)}
          </RulerLabels>
          <TicksRow><Ticks minor={16 / 3} every={15} major={8} base={9} /></TicksRow>
          <WorkArea>
            <WorkAreaBar><ThumbLines /></WorkAreaBar>
            <WorkAreaEnd />
          </WorkArea>
          <RulerBase />
          <WorkAreaStart />
          <Playhead $bottom="17px"><PlayheadIcon /></Playhead>
        </TimeRuler>
      </TimelineHead>
      <TrackGroup>
        <Tracks>
          <TrackSpacer />
          {videoTracks.map(t => <Track key={t.name} {...t} />)}
        </Tracks>
        <Scroll />
      </TrackGroup>
      <Splitter />
      <TrackGroup $grow>
        <Tracks>
          {audioTracks.map(t => <Track key={t.name} {...t} />)}
          <TrackEnd />
        </Tracks>
        <Scroll />
      </TrackGroup>
      <ZoomBar $flush>
        <ZoomHandle><HandleDots /></ZoomHandle>
        <ZoomThumb $flex={605}><ThumbLines /></ZoomThumb>
        <ZoomHandle $end><HandleDots /></ZoomHandle>
        <ZoomRest $flex={532} />
      </ZoomBar>
      <RedLine />
      <Marker $left="640px" $top="203px">4</Marker>
    </TimelineBody>
  </Panel>
);

const MeterPanel = () => (
  <Panel>
    <GripTop><WideGrip /></GripTop>
    <MeterBody>
      <MeterBars>
        <MeterClip><MeterClipCell aria-label="Left peak" /><MeterClipCell aria-label="Right peak" /></MeterClip>
        <MeterFloor />
      </MeterBars>
      <MeterScale>
        {['0', '-6', '-12', '-18', '-24', '-30', '-36', '-42', '-48', '-54'].map(db => (
          <ScaleCell key={db}>
            <svg width="5" height="38" stroke="#aaa">
              <path d="M0 6.500h4" />
              {[1, 2, 3, 4, 5].map(i => <path key={i} d={`M0 ${Math.round(6 + i * 6.300) + 0.5}h2`} />)}
            </svg>
            <span>{db}</span>
          </ScaleCell>
        ))}
        <ScaleCell $last>
          <svg width="5" height="8" stroke="#aaa"><path d="M0 6.500h4" /></svg>
          <span>dB</span>
        </ScaleCell>
      </MeterScale>
    </MeterBody>
  </Panel>
);

const App = () => (
  <Window>
    <GlobalStyle />
    <TitleBar>
      <AppBadge>Pr</AppBadge>
      <span>
        Adobe Premiere Pro - D:₩Users₩<Korean>바탕 화면</Korean>₩<Korean>프리미어강좌</Korean>₩<Korean>샘플영상</Korean>.prproj
      </span>
      <WindowButtons>
        <WindowButton aria-label="Minimize"><svg width="10" height="10"><path d="M0 5.500h10" stroke="#fff" /></svg></WindowButton>
        <WindowButton aria-label="Restore"><svg width="11" height="11" fill="none" stroke="#fff"><path d="M.5 3.500h7v7h-7zM2.500 3.500v-3h7v7h-2" /></svg></WindowButton>
        <WindowButton aria-label="Close"><svg width="11" height="11"><path d="M.5.5l10 10M10.500.5l-10 10" stroke="#fff" /></svg></WindowButton>
      </WindowButtons>
    </TitleBar>
    <MenuBar>
      {['File', 'Edit', 'Project', 'Clip', 'Sequence', 'Marker', 'Title', 'Window', 'Help'].map(m => (
        <MenuItem key={m}>{m}</MenuItem>
      ))}
    </MenuBar>
    <Workspace>
      <TopRow>
        <SourcePanel />
        <ProgramPanel />
      </TopRow>
      <BottomRow>
        <ProjectPanel />
        <ToolsPanel />
        <TimelinePanel />
        <MeterPanel />
      </BottomRow>
    </Workspace>
    <StatusBar><StatusEnd /></StatusBar>
  </Window>
);

export default App;
